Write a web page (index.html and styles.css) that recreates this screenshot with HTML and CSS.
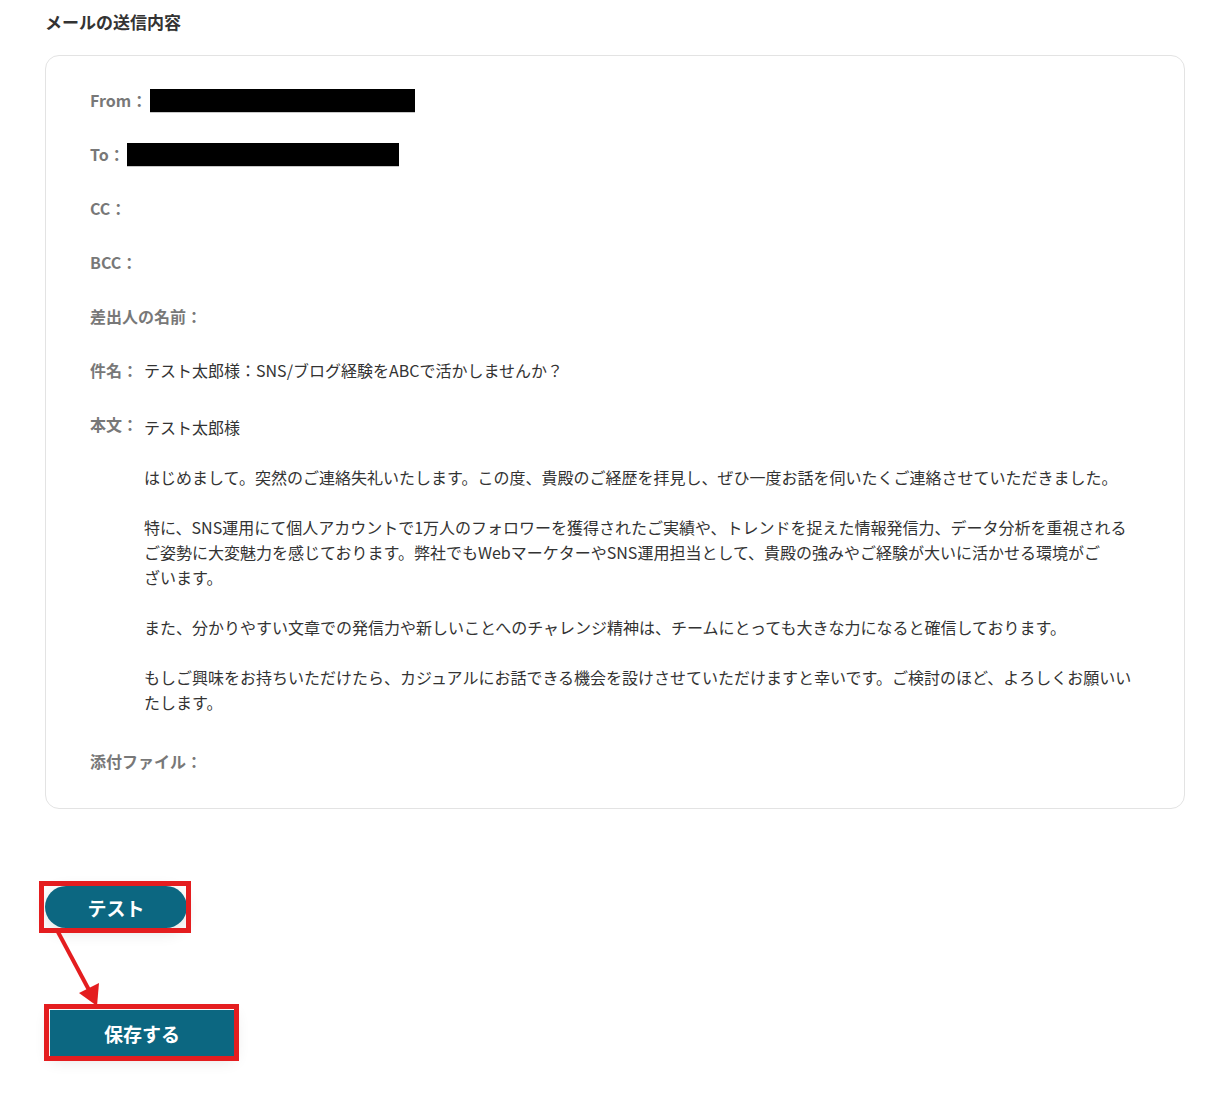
FILE: index.html
```html
<!DOCTYPE html>
<html lang="ja">
<head>
<meta charset="utf-8">
<title>メールの送信内容</title>
<link rel="stylesheet" href="styles.css">
</head>
<body>
<main class="page">
  <h2 class="title">メールの送信内容</h2>
  <section class="card">
    <div class="row">
      <span class="label">From：</span>
      <span class="redact redact-from"></span>
    </div>
    <div class="row">
      <span class="label">To：</span>
      <span class="redact redact-to"></span>
    </div>
    <div class="row"><span class="label">CC：</span></div>
    <div class="row"><span class="label">BCC：</span></div>
    <div class="row"><span class="label">差出人の名前：</span></div>
    <div class="row">
      <span class="label">件名：</span>
      <span class="value">テスト太郎様：SNS/ブログ経験をABCで活かしませんか？</span>
    </div>
    <div class="row row-body">
      <span class="label">本文：</span>
      <div class="value body-text">
        <p>テスト太郎様</p>
        <p>はじめまして。突然のご連絡失礼いたします。この度、貴殿のご経歴を拝見し、ぜひ一度お話を伺いたくご連絡させていただきました。</p>
        <p>特に、SNS運用にて個人アカウントで1万人のフォロワーを獲得されたご実績や、トレンドを捉えた情報発信力、データ分析を重視されるご姿勢に大変魅力を感じております。弊社でもWebマーケターやSNS運用担当として、貴殿の強みやご経験が大いに活かせる環境がご<br>ざいます。</p>
        <p>また、分かりやすい文章での発信力や新しいことへのチャレンジ精神は、チームにとっても大きな力になると確信しております。</p>
        <p>もしご興味をお持ちいただけたら、カジュアルにお話できる機会を設けさせていただけますと幸いです。ご検討のほど、よろしくお願いいたします。</p>
      </div>
    </div>
    <div class="row"><span class="label">添付ファイル：</span></div>
  </section>

  <div class="actions">
    <div class="btn-wrap btn-wrap-test">
      <button class="btn btn-test" type="button">テスト</button>
      <span class="mark mark-test"></span>
      <svg class="arrow" width="60" height="90" viewBox="0 0 60 90" aria-hidden="true">
        <line x1="5" y1="6" x2="36" y2="64" stroke="#e41d1f" stroke-width="4"/>
        <polygon points="44,80 26,67 46,57" fill="#e41d1f"/>
      </svg>
    </div>
    <div class="btn-wrap btn-wrap-save">
      <button class="btn btn-save" type="button">保存する</button>
      <span class="mark mark-save"></span>
    </div>
  </div>
</main>
</body>
</html>
```

FILE: styles.css
```css
html, body {
  margin: 0;
  padding: 0;
  background: #ffffff;
}

body {
  font-family: "Noto Sans CJK JP", "Noto Sans", sans-serif;
  color: #333333;
}

.page {
  padding: 10px 42px 40px 45px;
}

.title {
  margin: 0;
  font-size: 17px;
  line-height: 24px;
  font-weight: 700;
  color: #333333;
}

.card {
  margin-top: 21px;
  border: 1px solid #e3e3e3;
  border-radius: 14px;
  padding: 32px 44px 34px 44px;
  display: flex;
  flex-direction: column;
  gap: 29px;
}

.row {
  display: flex;
  align-items: center;
  min-height: 25px;
  font-size: 16px;
  line-height: 25px;
}

.label {
  font-weight: 700;
  color: #787878;
  flex: none;
  margin-right: 6px;
}

.value {
  color: #333333;
}

.redact {
  display: inline-block;
  height: 23px;
  background: #000000;
  border-bottom: 1px solid #c8c8c8;
}

.redact-from {
  width: 265px;
  margin-left: -3px;
}

.redact-to {
  width: 272px;
  margin-left: -4px;
}

.row-body {
  align-items: flex-start;
  margin-bottom: 5px;
}

.body-text {
  padding-top: 3px;
}

.body-text p {
  margin: 0 0 25px 0;
}

.body-text p:last-child {
  margin-bottom: 0;
}

.actions {
  display: flex;
  flex-direction: column;
  align-items: flex-start;
  margin-top: 77px;
}

.btn-wrap {
  position: relative;
}

.btn {
  border: none;
  color: #ffffff;
  font-family: "Noto Sans CJK JP", "Noto Sans", sans-serif;
  font-weight: 700;
  font-size: 19px;
  background: #0c6781;
  cursor: pointer;
  box-shadow: 0 4px 16px rgba(0, 0, 0, 0.12);
}

.btn-test {
  width: 142px;
  height: 42px;
  border-radius: 21px;
}

.btn-wrap-save {
  margin-top: 82px;
  margin-left: 5px;
}

.btn-save {
  width: 184px;
  height: 46px;
  border-radius: 0;
}

.mark {
  position: absolute;
  border: 5px solid #e41d1f;
  pointer-events: none;
}

.mark-test {
  left: -6px;
  top: -5px;
  width: 142px;
  height: 42px;
}

.mark-save {
  left: -6px;
  top: -6px;
  width: 185px;
  height: 47px;
}

.arrow {
  position: absolute;
  left: 8px;
  top: 40px;
}
```
